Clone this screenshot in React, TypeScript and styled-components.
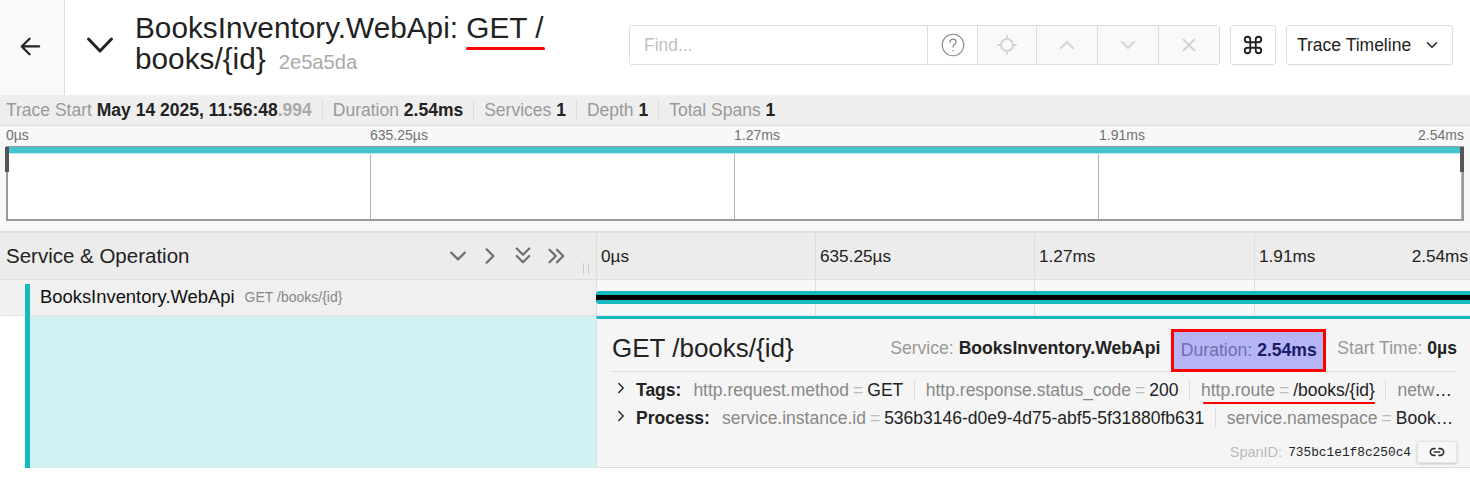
import React from "react";
import styled, { createGlobalStyle } from "styled-components";

const GlobalStyle = createGlobalStyle`
  html, body {
    margin: 0;
    padding: 0;
    background: #fff;
    overflow: hidden;
  }
  body {
    font-family: "Liberation Sans", Arial, sans-serif;
    color: rgba(0, 0, 0, 0.85);
  }
  * {
    box-sizing: border-box;
  }
`;

const Page = styled.div`
  width: 1470px;
  height: 490px;
  display: flex;
  flex-direction: column;
`;

/* top bar */
const Header = styled.header`
  height: 95px;
  display: flex;
  align-items: stretch;
`;

const BackLink = styled.div`
  width: 65px;
  padding: 0 5px 3px 0;
  background: #f9f9f9;
  border-right: 1px solid #ddd;
  display: flex;
  align-items: center;
  justify-content: center;
  color: #222;
`;

const TitleArea = styled.div`
  width: 564px;
  padding: 0 0 5px 20px;
  display: flex;
  align-items: center;
  gap: 20px;
`;

const Title = styled.h1`
  margin: 0;
  width: 440px;
  font-size: 29.75px;
  font-weight: 400;
  line-height: 31px;
  color: #222;
`;

/* hand-drawn red marks on the screenshot */
const TitleMark = styled.span`
  position: relative;
  &::after {
    content: "";
    position: absolute;
    left: 0;
    right: -2px;
    bottom: -6px;
    height: 3px;
    border-radius: 2px;
    background: #f00;
  }
`;

const RouteMark = styled.span`
  position: relative;
  &::after {
    content: "";
    position: absolute;
    left: 2px;
    right: 0;
    bottom: -4px;
    height: 2.5px;
    border-radius: 2px;
    background: #f00;
  }
`;

const TraceId = styled.small`
  margin-left: 13px;
  font-size: 20.2px;
  color: #aaa;
`;

const Toolbar = styled.div`
  padding-bottom: 5px;
  display: flex;
  align-items: center;
  gap: 10px;
`;

const SearchGroup = styled.div`
  width: 591px;
  height: 40px;
  display: flex;
  border: 1px solid #ddd;
  border-radius: 3px;
`;

const FindInput = styled.div`
  flex: 1;
  padding-left: 14px;
  display: flex;
  align-items: center;
  font-size: 17.5px;
  color: #bfbfbf;
`;

const SearchButton = styled.div<{ $w: number; $disabled?: boolean }>`
  width: ${(p) => p.$w}px;
  display: flex;
  align-items: center;
  justify-content: center;
  border-left: 1px solid #ddd;
  background: ${(p) => (p.$disabled ? "#f9f9f9" : "#fff")};
  color: ${(p) => (p.$disabled ? "#d4d4d4" : "#888")};
`;

const KeyButton = styled.div`
  width: 46px;
  height: 40px;
  display: flex;
  align-items: center;
  justify-content: center;
  border: 1px solid #ddd;
  border-radius: 3px;
  box-shadow: 0 2px 0 rgba(0, 0, 0, 0.015);
  color: #222;
`;

const ViewSelect = styled.div`
  width: 167px;
  height: 40px;
  padding: 0 14px 0 10px;
  display: flex;
  align-items: center;
  justify-content: space-between;
  border: 1px solid #ddd;
  border-radius: 3px;
  box-shadow: 0 2px 0 rgba(0, 0, 0, 0.015);
  font-size: 17.5px;
  color: #222;
`;

/* trace summary strip */
const MetaBar = styled.div`
  height: 31px;
  padding-left: 6px;
  display: flex;
  align-items: center;
  background: #eee;
  border-bottom: 1px solid #e2e2e2;
  font-size: 17.5px;
  white-space: nowrap;
`;

const MetaItem = styled.div`
  padding-right: 10px;
  margin-right: 10px;
  border-right: 1px solid #ddd;
  color: #999;
  line-height: 20px;
  &:last-child {
    border-right: 0;
  }
`;

const MetaValue = styled.strong`
  color: #222;
  font-weight: 700;
`;

const Millis = styled.strong`
  color: #aaa;
`;

/* minimap */
const Minimap = styled.section`
  height: 106px;
  padding: 0 6px 0 6px;
  background: #f8f8f8;
  border-bottom: 1px solid #ddd;
`;

const RulerRow = styled.div`
  height: 20px;
  display: grid;
  grid-template-columns: 364px 364px 365px 1fr;
  font-size: 14px;
  line-height: 18px;
  color: #717171;
`;

const RulerCell = styled.div`
  display: flex;
  justify-content: space-between;
`;

const Canvas = styled.div`
  position: relative;
  width: 1458px;
  height: 75px;
  display: grid;
  grid-template-columns: 363px 364px 364px 1fr;
  background: #fff;
  border: 2px solid #999;
  border-top-width: 1px;
`;

const CanvasCell = styled.div`
  border-right: 1px solid #b5b5b5;
  &:last-of-type {
    border-right: 0;
  }
`;

const MiniBar = styled.div`
  position: absolute;
  left: 0;
  right: 0;
  top: 0;
  height: 7px;
  background: #44c5cb;
  border-bottom: 1px solid #b8ecee;
`;

const MiniHandle = styled.div<{ $side: "left" | "right" }>`
  position: absolute;
  top: 0;
  ${(p) => (p.$side === "left" ? "left: -3px;" : "right: -2px;")}
  width: 4px;
  height: 25px;
  background: #555;
`;

/* header row of the span list */
const ListHeader = styled.div`
  height: 48px;
  display: flex;
  background: #ececec;
  border-top: 1px solid #ddd;
  border-bottom: 1px solid #ddd;
`;

const NameColumn = styled.div`
  position: relative;
  width: 596px;
  padding: 0 29px 0 6px;
  display: flex;
  align-items: center;
  justify-content: space-between;
  font-size: 20.5px;
  color: #222;
`;

const CollapseIcons = styled.div`
  display: flex;
  align-items: center;
  gap: 14px;
  color: #707070;
`;

const ResizeGrip = styled.div`
  position: absolute;
  right: 7px;
  bottom: 4px;
  width: 6px;
  height: 12px;
  border-left: 1px solid #ccc;
  border-right: 1px solid #ccc;
`;

const TimeColumns = styled.div`
  flex: 1;
  display: grid;
  grid-template-columns: 219px 219px 220px 1fr;
`;

const TimeCell = styled.div`
  padding: 0 2px 0 4px;
  display: flex;
  align-items: center;
  justify-content: space-between;
  border-left: 1px solid #ddd;
  font-size: 17.2px;
  color: #222;
`;

/* span row */
const SpanRow = styled.div`
  height: 36px;
  display: flex;
  border-bottom: 1px solid #e4e4e4;
`;

const SpanName = styled.div`
  width: 596px;
  padding: 4px 0 0 25px;
  background: #f0f0f0;
`;

const SpanLabel = styled.div`
  height: 32px;
  padding: 0 0 6px 10px;
  display: flex;
  align-items: center;
  gap: 10px;
  border-left: 5px solid #17b8be;
  font-size: 18.4px;
  color: #111;
`;

const SpanOperation = styled.span`
  font-size: 14px;
  color: #888;
`;

const SpanTimeline = styled.div`
  position: relative;
  flex: 1;
  display: grid;
  grid-template-columns: 219px 219px 220px 1fr;
  background: #f8f8f8;
`;

const TickCell = styled.div`
  border-left: 1px solid #ddd;
`;

const SpanBar = styled.div`
  position: absolute;
  left: 0;
  right: 0;
  top: 11px;
  height: 13px;
  display: flex;
  align-items: center;
  background: #17b8be;
  border-radius: 3px 0 0 3px;
`;

const SpanBarCore = styled.div`
  width: 100%;
  height: 5px;
  background: #000;
`;

/* detail panel */
const DetailRow = styled.div`
  height: 152px;
  display: flex;
`;

const DetailGutter = styled.div`
  margin-left: 25px;
  flex: 0 0 571px;
  background: #d1f1f2;
  border-left: 5px solid #17b8be;
`;

const Detail = styled.div`
  flex: 1;
  min-width: 0;
  padding: 0 13px 0 15px;
  background: #f5f5f5;
  border-top: 3px solid #17b8be;
  border-bottom: 1px solid #ddd;
  border-left: 1px solid #ddd;
`;

const DetailHead = styled.div`
  height: 53px;
  padding-top: 6px;
  display: flex;
  align-items: center;
  justify-content: space-between;
  border-bottom: 1px solid #ddd;
`;

const DetailTitle = styled.h2`
  margin: 0;
  font-size: 26px;
  font-weight: 400;
  color: #222;
`;

const Overview = styled.div`
  align-self: stretch;
  display: flex;
  align-items: center;
  font-size: 17.6px;
`;

const OverviewItem = styled.div`
  padding: 0 11px;
  color: #999;
  white-space: nowrap;
  &:last-child {
    padding-right: 0;
  }
`;

const HighlightItem = styled.div`
  align-self: flex-end;
  width: 155px;
  height: 43px;
  margin-bottom: -1px;
  display: flex;
  align-items: center;
  justify-content: center;
  background: #b5b5f6;
  border: 3px solid #f00;
  color: #6d6db0;
  white-space: nowrap;
`;

const HighlightValue = styled.strong`
  color: #1b1b66;
`;

const KvRow = styled.div<{ $first?: boolean }>`
  height: 28px;
  margin-top: ${(p) => (p.$first ? "4px" : "0")};
  display: flex;
  align-items: center;
  font-size: 17.5px;
  line-height: 28px;
  color: #222;
`;

const KvToggle = styled.div`
  width: 24px;
  padding: 0 0 4px 3px;
  display: flex;
  align-items: center;
  color: #222;
`;

const KvLabel = styled.strong`
  margin-right: 12px;
  color: #222;
  white-space: nowrap;
`;

const KvList = styled.div`
  flex: 1;
  min-width: 0;
  overflow: hidden;
  white-space: nowrap;
  text-overflow: ellipsis;
`;

const Kv = styled.span`
  padding-right: 10.5px;
  margin-right: 11px;
  border-right: 1px solid #ddd;
  &:last-child {
    padding-right: 0;
    margin-right: 0;
    border-right: 0;
  }
`;

const KvKey = styled.span`
  color: #888;
`;

const KvEq = styled.span`
  margin: 0 4px;
  color: #bbb;
`;

const SpanMeta = styled.div`
  height: 28px;
  margin-top: 6px;
  display: flex;
  align-items: center;
  justify-content: flex-end;
  gap: 6px;
`;

const SpanIdLabel = styled.span`
  font-size: 14.5px;
  color: #bbb;
`;

const SpanIdValue = styled.span`
  font-family: "Liberation Mono", monospace;
  font-size: 12.8px;
  color: #222;
`;

const LinkButton = styled.div`
  width: 40px;
  height: 22px;
  display: flex;
  align-items: center;
  justify-content: center;
  background: #f7f7f7;
  border: 1px solid #e5e5e5;
  border-radius: 2px;
  box-shadow: 0 1px 3px rgba(0, 0, 0, 0.2);
  color: #333;
`;

type IconProps = { size?: number; width?: number };

const Chevron = ({ d, size = 16, width = 1.6 }: IconProps & { d: string }) => (
  <svg width={size} height={size} viewBox="0 0 16 16" fill="none" stroke="currentColor" strokeWidth={width} strokeLinecap="round" strokeLinejoin="round">
    <path d={d} />
  </svg>
);

const DOWN = "M2 5l6 6 6-6";
const UP = "M2 11l6-6 6 6";
const RIGHT = "M5 2l6 6-6 6";

export default function App() {
  return (
    <Page>
      <GlobalStyle />
      <Header>
        <BackLink>
          <svg width="22" height="22" viewBox="0 0 24 24" fill="none" stroke="currentColor" strokeWidth="2.4" strokeLinecap="round" strokeLinejoin="round">
            <path d="M22 12.5H3M11.5 4l-8.5 8.5 8.5 8.5" />
          </svg>
        </BackLink>
        <TitleArea>
          <svg width="30" height="30" viewBox="0 0 30 30" fill="none" stroke="#222" strokeWidth="3" strokeLinecap="round" strokeLinejoin="round">
            <path d="M3.5 9l11.5 12 11.5-12" />
          </svg>
          <Title>
            BooksInventory.WebApi: <TitleMark>GET /</TitleMark>
            <wbr />
            books/{"{id}"}
            <TraceId>2e5a5da</TraceId>
          </Title>
        </TitleArea>
        <Toolbar>
          <SearchGroup>
            <FindInput>Find...</FindInput>
            <SearchButton $w={50}>
              <svg width="24" height="24" viewBox="0 0 24 24" fill="none" stroke="currentColor" strokeWidth="1.1" strokeLinecap="round">
                <circle cx="12" cy="12" r="10.8" />
                <path d="M9 9.2c0-1.8 1.3-3 3-3 1.7 0 3 1.1 3 2.7 0 2.2-2.9 2.4-2.9 5.1M12.1 17.5v.4" strokeWidth="1.3" />
              </svg>
            </SearchButton>
            <SearchButton $w={59} $disabled>
              <svg width="20" height="20" viewBox="0 0 20 20" fill="none" stroke="currentColor" strokeWidth="2" strokeLinecap="round">
                <circle cx="10" cy="10" r="6" />
                <path d="M10 1v3M10 16v3M1 10h3M16 10h3" />
              </svg>
            </SearchButton>
            <SearchButton $w={61} $disabled>
              <Chevron d={UP} width={2} />
            </SearchButton>
            <SearchButton $w={61} $disabled>
              <Chevron d={DOWN} width={2} />
            </SearchButton>
            <SearchButton $w={61} $disabled>
              <Chevron d="M2.5 2.5l11 11M13.5 2.5l-11 11" width={2} />
            </SearchButton>
          </SearchGroup>
          <KeyButton>
            <svg width="22" height="22" viewBox="0 0 24 24" fill="none" stroke="currentColor" strokeWidth="2" strokeLinecap="round" strokeLinejoin="round">
              <path d="M15 6v12a3 3 0 1 0 3-3H6a3 3 0 1 0 3 3V6a3 3 0 1 0-3 3h12a3 3 0 1 0-3-3" />
            </svg>
          </KeyButton>
          <ViewSelect>
            Trace Timeline
            <Chevron d={DOWN} size={12} width={2} />
          </ViewSelect>
        </Toolbar>
      </Header>

      <MetaBar>
        <MetaItem>
          Trace Start <MetaValue>May 14 2025, 11:56:48</MetaValue>
          <Millis>.994</Millis>
        </MetaItem>
        <MetaItem>
          Duration <MetaValue>2.54ms</MetaValue>
        </MetaItem>
        <MetaItem>
          Services <MetaValue>1</MetaValue>
        </MetaItem>
        <MetaItem>
          Depth <MetaValue>1</MetaValue>
        </MetaItem>
        <MetaItem>
          Total Spans <MetaValue>1</MetaValue>
        </MetaItem>
      </MetaBar>

      <Minimap>
        <RulerRow>
          <RulerCell>0µs</RulerCell>
          <RulerCell>635.25µs</RulerCell>
          <RulerCell>1.27ms</RulerCell>
          <RulerCell>
            <span>1.91ms</span>
            <span>2.54ms</span>
          </RulerCell>
        </RulerRow>
        <Canvas>
          <CanvasCell />
          <CanvasCell />
          <CanvasCell />
          <CanvasCell />
          <MiniBar />
          <MiniHandle $side="left" />
          <MiniHandle $side="right" />
        </Canvas>
      </Minimap>

      <ListHeader>
        <NameColumn>
          Service &amp; Operation
          <CollapseIcons>
            <Chevron d={DOWN} size={18} width={2} />
            <Chevron d={RIGHT} size={18} width={2} />
            <Chevron d="M3 2l5 5 5-5M3 8l5 5 5-5" size={20} width={1.8} />
            <Chevron d="M2 3l5 5-5 5M8 3l5 5-5 5" size={20} width={1.8} />
          </CollapseIcons>
          <ResizeGrip />
        </NameColumn>
        <TimeColumns>
          <TimeCell>0µs</TimeCell>
          <TimeCell>635.25µs</TimeCell>
          <TimeCell>1.27ms</TimeCell>
          <TimeCell>
            <span>1.91ms</span>
            <span>2.54ms</span>
          </TimeCell>
        </TimeColumns>
      </ListHeader>

      <SpanRow>
        <SpanName>
          <SpanLabel>
            BooksInventory.WebApi
            <SpanOperation>GET /books/{"{id}"}</SpanOperation>
          </SpanLabel>
        </SpanName>
        <SpanTimeline>
          <TickCell />
          <TickCell />
          <TickCell />
          <TickCell />
          <SpanBar>
            <SpanBarCore />
          </SpanBar>
        </SpanTimeline>
      </SpanRow>

      <DetailRow>
        <DetailGutter />
        <Detail>
          <DetailHead>
            <DetailTitle>GET /books/{"{id}"}</DetailTitle>
            <Overview>
              <OverviewItem>
                Service: <MetaValue>BooksInventory.WebApi</MetaValue>
              </OverviewItem>
              <HighlightItem>
                Duration:&nbsp;<HighlightValue>2.54ms</HighlightValue>
              </HighlightItem>
              <OverviewItem>
                Start Time: <MetaValue>0µs</MetaValue>
              </OverviewItem>
            </Overview>
          </DetailHead>
          <KvRow $first>
            <KvToggle>
              <Chevron d="M5 2l6 6-6 6" size={12} width={1.8} />
            </KvToggle>
            <KvLabel>Tags:</KvLabel>
            <KvList>
              <Kv>
                <KvKey>http.request.method</KvKey>
                <KvEq>=</KvEq>GET
              </Kv>
              <Kv>
                <KvKey>http.response.status_code</KvKey>
                <KvEq>=</KvEq>200
              </Kv>
              <Kv>
                <RouteMark>
                  <KvKey>http.route</KvKey>
                  <KvEq>=</KvEq>/books/{"{id}"}
                </RouteMark>
              </Kv>
              <Kv>
                <KvKey>network.protocol.version</KvKey>
                <KvEq>=</KvEq>1.1
              </Kv>
            </KvList>
          </KvRow>
          <KvRow>
            <KvToggle>
              <Chevron d="M5 2l6 6-6 6" size={12} width={1.8} />
            </KvToggle>
            <KvLabel>Process:</KvLabel>
            <KvList>
              <Kv>
                <KvKey>service.instance.id</KvKey>
                <KvEq>=</KvEq>536b3146-d0e9-4d75-abf5-5f31880fb631
              </Kv>
              <Kv>
                <KvKey>service.namespace</KvKey>
                <KvEq>=</KvEq>BooksInventory
              </Kv>
            </KvList>
          </KvRow>
          <SpanMeta>
            <SpanIdLabel>SpanID:</SpanIdLabel>
            <SpanIdValue>735bc1e1f8c250c4</SpanIdValue>
            <LinkButton>
              <svg width="16" height="16" viewBox="0 0 24 24" fill="none" stroke="currentColor" strokeWidth="2.4" strokeLinecap="round">
                <path d="M9 7H7a5 5 0 0 0 0 10h2M15 7h2a5 5 0 0 1 0 10h-2M8 12h8" />
              </svg>
            </LinkButton>
          </SpanMeta>
        </Detail>
      </DetailRow>
    </Page>
  );
}
